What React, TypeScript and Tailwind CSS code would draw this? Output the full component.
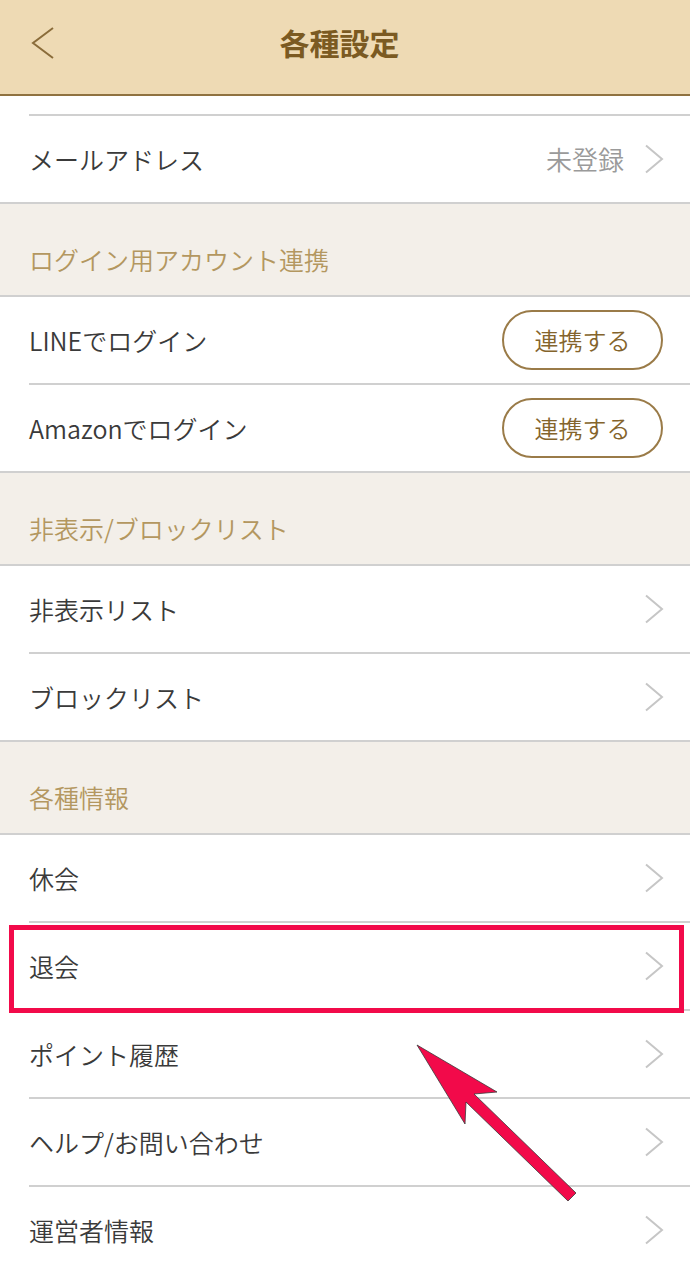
import React from "react";

const font = { fontFamily: '"Noto Sans CJK JP", "Noto Sans", sans-serif' };

function Chevron() {
  return (
    <svg width="20" height="30" viewBox="0 0 20 30" className="shrink-0">
      <path d="M2 1.5 L18 15 L2 28.5" fill="none" stroke="#c6c6c6" strokeWidth="2" />
    </svg>
  );
}

function Row({ label, right, last, button }: { label: string; right?: string; last?: boolean; button?: boolean }) {
  return (
    <div className={last ? "bg-white border-b-2 border-[#d0d0d0]" : "bg-white pl-[29px]"}>
      <div className={last ? "pl-[29px]" : "border-b-2 border-[#d0d0d0]"}>
        <div className="h-[86px] flex items-center justify-between pr-[26px]">
          <span className="text-[25px] font-[350] text-[#3a3a3a] leading-none">{label}</span>
          {button ? (
            <div className="w-[161px] h-[60px] rounded-full border-2 border-[#9a7b48] flex items-center justify-center text-[24px] font-[350] text-[#84642c] mr-[1px]">
              連携する
            </div>
          ) : (
            <div className="flex items-center gap-[20px]">
              {right && <span className="text-[26px] font-[350] text-[#9a9a9a] leading-none">{right}</span>}
              <Chevron />
            </div>
          )}
        </div>
      </div>
    </div>
  );
}

function Section({ title }: { title: string }) {
  return (
    <div className="h-[93px] bg-[#f3efe9] border-b-2 border-[#d0d0d0] pl-[29px] pt-[37px]">
      <span className="block text-[25px] font-[350] leading-[36px] text-[#b39760]">{title}</span>
    </div>
  );
}

export default function App() {
  return (
    <div className="relative w-[690px] h-[1271px] overflow-hidden bg-white" style={font}>
      <div className="h-[96px] bg-[#eedab4] border-b-2 border-[#8f7240] relative flex items-center justify-center">
        <svg width="26" height="32" viewBox="0 0 26 32" className="absolute left-[30px] top-[27px]">
          <path d="M23 1 L3 16 L23 31" fill="none" stroke="#8a6c3a" strokeWidth="2" />
        </svg>
        <span className="text-[30px] font-bold text-[#7b5a22] leading-none -mt-[10px] mr-[11px]">各種設定</span>
      </div>
      <div className="bg-white pl-[29px]">
        <div className="h-[20px] border-b-2 border-[#d0d0d0]" />
      </div>
      <Row label="メールアドレス" right="未登録" last />
      <Section title="ログイン用アカウント連携" />
      <Row label="LINEでログイン" button />
      <Row label="Amazonでログイン" button last />
      <Section title="非表示/ブロックリスト" />
      <Row label="非表示リスト" />
      <Row label="ブロックリスト" last />
      <Section title="各種情報" />
      <Row label="休会" />
      <Row label="退会" />
      <Row label="ポイント履歴" />
      <Row label="ヘルプ/お問い合わせ" />
      <Row label="運営者情報" />

      <div className="absolute left-[9px] top-[925px] w-[675px] h-[88px] border-[5px] border-[#f20a4a]" />
      <svg className="absolute left-0 top-0 pointer-events-none" width="690" height="1271">
        <polygon
          points="417,1045 497,1092 474,1094 576,1193 568,1201 466,1102 465,1124"
          fill="#f20a4a"
          stroke="#3a3a3a"
          strokeWidth="0.8"
        />
      </svg>
    </div>
  );
}
